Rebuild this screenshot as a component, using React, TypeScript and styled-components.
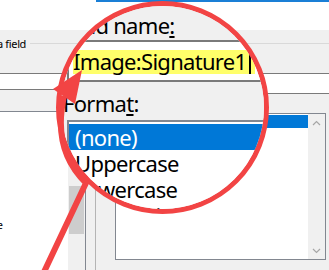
import styled, { createGlobalStyle } from "styled-components"

const GlobalStyle = createGlobalStyle`
  html, body {
    margin: 0;
    padding: 0;
    background: #f0f0f0;
  }
`

const Page = styled.div`
  position: relative;
  width: 329px;
  height: 270px;
  overflow: hidden;
`

const Window = styled.div`
  width: 329px;
  height: 270px;
  display: flex;
  flex-direction: column;
  background: #f0f0f0;
  color: #000;
  font-family: "Noto Sans", "Open Sans", sans-serif;
  font-size: 11px;
  letter-spacing: -0.35px;
  overflow: hidden;
`

const TitleBar = styled.div`
  flex: none;
  height: 30px;
  display: flex;
  background: #fff;
`

const Accent = styled.div`
  flex: 1;
  height: 2px;
  margin-left: 96px;
  background: #1a7fd6;
`

const Body = styled.div`
  flex: 1;
  min-height: 0;
  display: flex;
`

const Section = styled.div<{ $offset: number; $width: number }>`
  flex: none;
  display: flex;
  flex-direction: column;
  margin-left: ${(p) => p.$offset}px;
  width: ${(p) => p.$width}px;
`

const Divider = styled.div`
  flex: none;
  width: 1px;
  margin: 8px 0 0 9px;
  background: #b4b4b4;
`

const Heading = styled.div<{ $shift?: number }>`
  display: flex;
  align-items: center;
  gap: 4px;
  height: 14px;
  margin-top: 6px;
  margin-left: ${(p) => p.$shift ?? 0}px;
  white-space: nowrap;

  &::after {
    content: "";
    flex: 1;
    height: 1px;
    background: #d9d9d9;
  }
`

const Label = styled.div<{ $gap: number }>`
  height: 14px;
  line-height: 14px;
  margin-top: ${(p) => p.$gap}px;
  white-space: nowrap;
`

const Key = styled.span`
  text-decoration: underline;
  text-underline-offset: 1px;
`

const Field = styled.div<{ $inset?: number }>`
  box-sizing: border-box;
  height: 21px;
  margin-left: ${(p) => p.$inset ?? 0}px;
  padding-left: 2px;
  display: flex;
  align-items: center;
  background: #fff;
  border: 1px solid #7a7a7a;
  white-space: nowrap;
`

const Marked = styled.span`
  display: inline-flex;
  align-items: center;
  height: 12px;
  padding-right: 2px;
  background: #ffff6a;
  line-height: 12px;
`

const Caret = styled.span`
  width: 1px;
  height: 13px;
  margin-left: 1px;
  background: #000;
`

const ListBox = styled.div<{ $gap: number; $inset?: number; $height: number }>`
  box-sizing: border-box;
  flex: none;
  display: flex;
  height: ${(p) => p.$height}px;
  margin-top: ${(p) => p.$gap}px;
  margin-left: ${(p) => p.$inset ?? 0}px;
  background: #fff;
  border: 1px solid #828790;
`

const Items = styled.div<{ $top?: number }>`
  flex: 1;
  min-width: 0;
  padding: ${(p) => p.$top ?? 1}px 0 0 0;
  overflow: hidden;
`

const Item = styled.div<{ $selected?: boolean }>`
  height: 13px;
  line-height: 13px;
  padding-left: 3px;
  white-space: nowrap;
  background: ${(p) => (p.$selected ? "#0078d7" : "transparent")};
  color: ${(p) => (p.$selected ? "#fff" : "#000")};
`

const ScrollBar = styled.div`
  flex: none;
  width: 17px;
  display: flex;
  flex-direction: column;
  align-items: center;
  background: #f0f0f0;
`

const Arrow = styled.div`
  flex: none;
  height: 17px;
  display: flex;
  align-items: center;
  justify-content: center;
`

const Track = styled.div`
  flex: 1;
  align-self: stretch;
  display: flex;
  flex-direction: column;
`

const Thumb = styled.div<{ $top: number; $size: number }>`
  margin: ${(p) => p.$top}px 1px 0;
  height: ${(p) => p.$size}px;
  background: #cdcdcd;
`

const Lens = styled.div`
  position: absolute;
  left: 56px;
  top: 1px;
  width: 213px;
  height: 213px;
  box-sizing: border-box;
  border: 5px solid #f24444;
  border-radius: 50%;
  overflow: hidden;
  background: #f0f0f0;
`

const Magnified = styled.div`
  position: absolute;
  left: -61px;
  top: -6px;
  transform-origin: 163px 106px;
  transform: scale(2);
`

const Pointer = styled.svg`
  position: absolute;
  inset: 0;
  pointer-events: none;
`

const Chevron = ({ up }: { up?: boolean }) => (
  <svg width="9" height="6" viewBox="0 0 9 6">
    <path
      d={up ? "M1 5 L4.5 1.5 L8 5" : "M1 1 L4.5 4.5 L8 1"}
      fill="none"
      stroke="#a6a6a6"
      strokeWidth="1.2"
    />
  </svg>
)

const fieldNames = [
  "Eq",
  "FileName",
  "FileSize",
  "Fill-in",
  "GoToButton",
  "GreetingLine",
  "Hyperlink",
  "If",
  "IncludePicture",
  "IncludeText",
  "Index",
  "Info",
]

const formats = ["(none)", "Uppercase", "Lowercase", "First capital", "Title case"]

const FieldDialog = () => (
  <Window>
    <TitleBar>
      <Accent />
    </TitleBar>
    <Body>
      <Section $offset={-71} $width={157}>
        <Heading $shift={-3}>Please choose a field</Heading>
        <Label $gap={9}>Categories:</Label>
        <Field>(All)</Field>
        <Label $gap={4}>Field names:</Label>
        <ListBox $gap={3} $height={170}>
          <Items $top={2}>
            {fieldNames.map((name) => (
              <Item key={name}>{name}</Item>
            ))}
          </Items>
          <ScrollBar>
            <Arrow>
              <Chevron up />
            </Arrow>
            <Track>
              <Thumb $top={57} $size={48} />
            </Track>
          </ScrollBar>
        </ListBox>
      </Section>
      <Divider />
      <Section $offset={17} $width={230}>
        <Heading>Field properties</Heading>
        <Label $gap={9}>
          Field name<Key>:</Key>
        </Label>
        <Field $inset={2}>
          <Marked>
            Image:Signature1
            <Caret />
          </Marked>
        </Field>
        <Label $gap={4}>
          Forma<Key>t</Key>:
        </Label>
        <ListBox $gap={1} $inset={2} $height={147} style={{ width: 211 }}>
          <Items>
            {formats.map((f, i) => (
              <Item key={f} $selected={i === 0}>
                {f}
              </Item>
            ))}
          </Items>
          <ScrollBar>
            <Arrow>
              <Chevron up />
            </Arrow>
            <Track />
            <Arrow>
              <Chevron />
            </Arrow>
          </ScrollBar>
        </ListBox>
      </Section>
    </Body>
  </Window>
)

export default function App() {
  return (
    <>
      <GlobalStyle />
      <Page>
        <FieldDialog />
        <Lens>
          <Magnified>
            <FieldDialog />
          </Magnified>
        </Lens>
        <Pointer width="329" height="270" viewBox="0 0 329 270">
          <path
            d="M44 272 L86 183 Q52 150 64 96"
            fill="none"
            stroke="#f24444"
            strokeWidth="6"
          />
          <polygon points="82,70 75,104 53,89" fill="#f24444" />
        </Pointer>
      </Page>
    </>
  )
}
